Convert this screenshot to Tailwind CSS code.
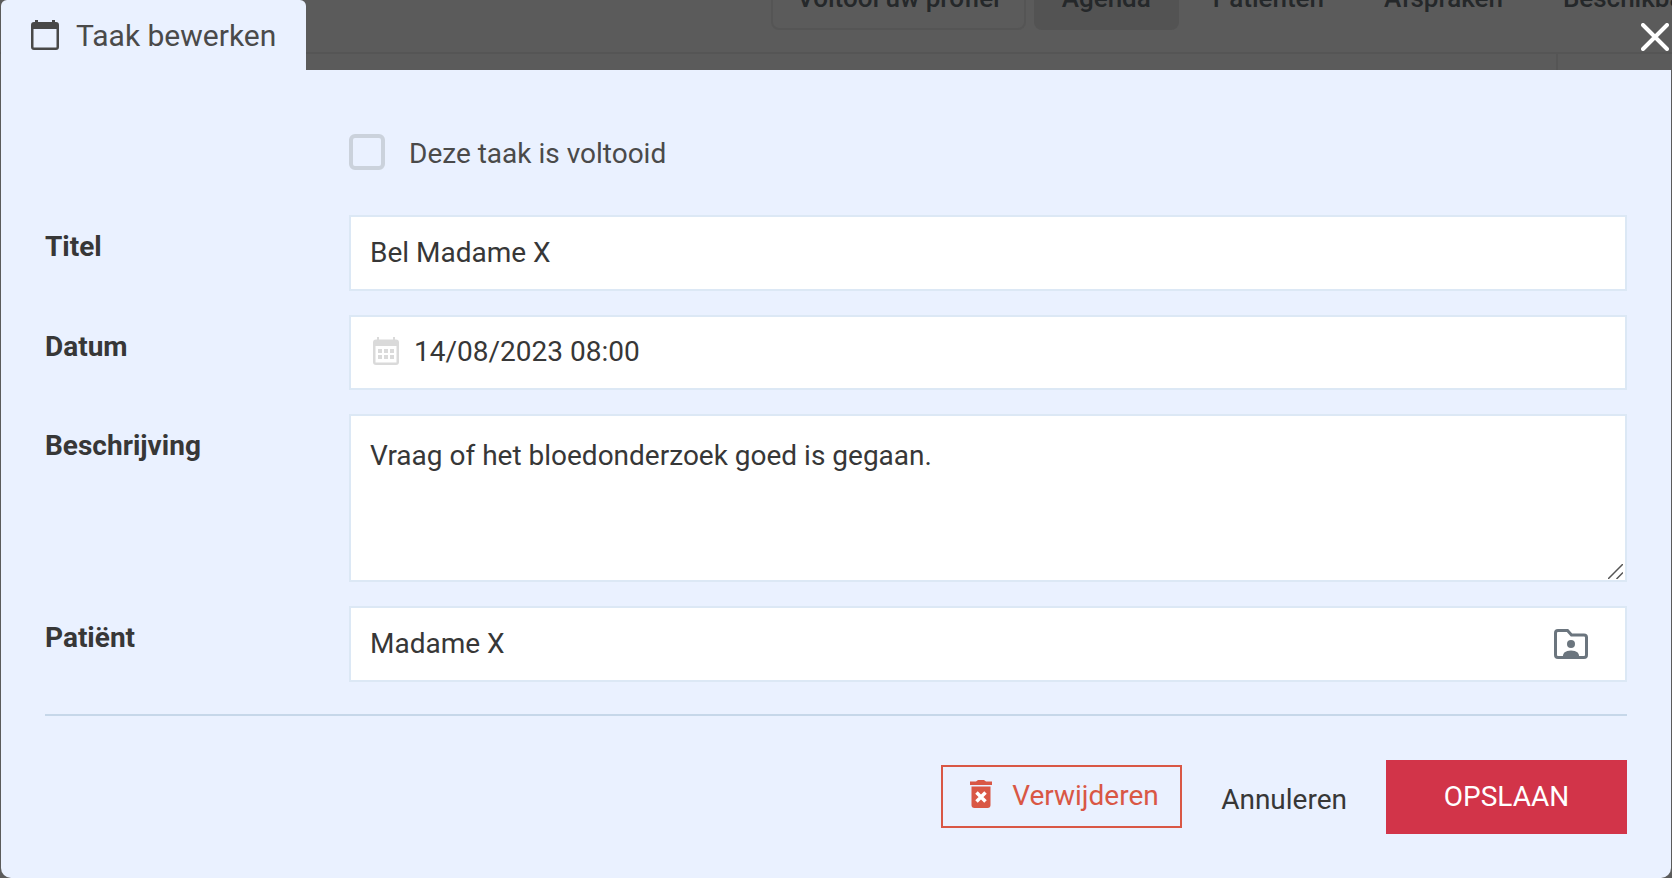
<!DOCTYPE html>
<html lang="nl">
<head>
    <meta charset="UTF-8">
    <meta name="viewport" content="width=device-width, initial-scale=1.0">
    <title>Taak bewerken</title>
    <script src="https://cdn.jsdelivr.net/npm/@tailwindcss/browser@4"></script>
</head>
<body class="bg-[#5b5b5b] font-['Roboto',sans-serif] text-[28px] leading-9 text-[#373737]">
    <!-- Agenda achter het venster -->
    <div class="flex flex-col h-screen overflow-hidden">
        <header class="h-[54px] shrink-0 border-b-2 border-[#555]">
            <nav class="-mt-[34px] flex gap-2 pl-[771px] text-[26px] font-medium text-[#25282a] whitespace-nowrap">
                <a href="#" class="h-16 px-6 leading-[60px] border-2 border-[#555] rounded-lg">Voltooi uw profiel</a>
                <a href="#" class="h-16 px-7 leading-[64px] bg-[#535353] rounded-lg">Agenda</a>
                <a href="#" class="h-16 px-[26px] leading-[64px]">Patiënten</a>
                <a href="#" class="h-16 px-[26px] leading-[64px]">Afspraken</a>
                <a href="#" class="h-16 px-[26px] leading-[64px]">Beschikbaarheid</a>
            </nav>
        </header>
        <main class="grow flex justify-end">
            <aside class="w-[116px] border-l-2 border-[#555]"></aside>
        </main>
    </div>

    <!-- Venster -->
    <div role="dialog" aria-labelledby="dialog-title" class="absolute inset-0 flex flex-col px-px">
        <div class="flex justify-between h-[70px] shrink-0">
            <div class="flex items-center gap-[17px] w-[305px] pl-[30px] bg-[#eaf1ff] rounded-t-md">
                <svg class="w-7 h-[30px] text-[#484848]" viewBox="0 0 28 30">
                    <path d="M4 0h3v2h14V0h3v2h1q3 0 3 3v22q0 3-3 3H3q-3 0-3-3V5q0-3 3-3h1zM2.500 9v18q0 .5.5.5h22q.5 0 .5-.5V9z" fill="currentColor" fill-rule="evenodd"/>
                </svg>
                <h1 id="dialog-title" class="pt-0.5 text-[30px] text-[#4a4a4a] whitespace-nowrap">Taak bewerken</h1>
            </div>
            <button type="button" aria-label="Sluiten" class="flex items-center pt-1 pr-0.5 text-white">
                <svg class="w-7 h-7" viewBox="0 0 28 28" fill="none" stroke="currentColor" stroke-width="4" stroke-linecap="round">
                    <path d="M2 2l24 24M26 2L2 26"/>
                </svg>
            </button>
        </div>

        <form class="grow bg-[#eaf1ff] rounded-b-[10px] pt-16 px-11">
            <div class="grid grid-cols-[304px_1fr] gap-y-6">
                <label class="col-start-2 flex gap-6 mb-[21px] h-9 text-[#4a4a4a]">
                    <input type="checkbox" class="appearance-none size-9 border-4 border-[#cbd2dc] rounded-md checked:bg-[#cbd2dc]">
                    <span class="pt-0.5">Deze taak is voltooid</span>
                </label>

                <label for="titel" class="pt-3.5 font-bold">Titel</label>
                <input type="text" id="titel" value="Bel Madame X" class="w-full h-[76px] px-[19px] pb-0.5 bg-white border-2 border-[#dce8f5] outline-none">

                <label for="datum" class="pt-3.5 font-bold">Datum</label>
                <div class="flex items-center h-[75px] pl-[22px] gap-[15px] bg-white border-2 border-[#dce8f5]">
                    <svg class="w-[26px] h-7 shrink-0 mb-1 text-[#dadada]" viewBox="0 0 26 28">
                        <path d="M4 0h2v2.500h14V0h2v2.500h1q3 0 3 3V25q0 3-3 3H3q-3 0-3-3V5.500q0-3 3-3h1zM2.500 9v16.500h21V9z" fill="currentColor" fill-rule="evenodd"/>
                        <path d="M5 12h4v4H5zm6 0h4v4h-4zm6 0h4v4h-4zM5 18h4v4H5zm6 0h4v4h-4zm6 0h4v4h-4z" fill="currentColor"/>
                    </svg>
                    <input type="text" id="datum" value="14/08/2023 08:00" class="grow h-full pb-0.5 bg-transparent outline-none">
                </div>

                <label for="beschrijving" class="pt-3.5 font-bold">Beschrijving</label>
                <div class="relative flex">
                    <textarea id="beschrijving" class="w-full h-[168px] px-[19px] py-[22px] bg-white border-2 border-[#dce8f5] resize-none outline-none">Vraag of het bloedonderzoek goed is gegaan.</textarea>
                    <svg class="absolute right-1 bottom-[3px] size-[15px] pointer-events-none" viewBox="0 0 15 15" fill="none" stroke="#555" stroke-width="1.5">
                        <path d="M0 15L15 0M8.500 15L15 8.500"/>
                    </svg>
                </div>

                <label for="patient" class="pt-3.5 font-bold">Patiënt</label>
                <div class="flex items-center h-[76px] pr-[37px] bg-white border-2 border-[#dce8f5]">
                    <input type="text" id="patient" value="Madame X" class="grow h-full px-[19px] pb-0.5 bg-transparent outline-none">
                    <button type="button" aria-label="Patiëntendossier">
                        <svg class="w-[34px] h-[30px] text-[#6b757e]" viewBox="0 0 34 30">
                            <path d="M4 1.500h9.500l4 4.500H30q2.500 0 2.500 2.500V26q0 2.500-2.500 2.500H4Q1.500 28.500 1.500 26V4Q1.500 1.500 4 1.500z" fill="none" stroke="currentColor" stroke-width="3"/>
                            <circle cx="17" cy="15" r="4" fill="currentColor"/>
                            <path d="M8.500 28.500q0-7 8.500-7t8.500 7z" fill="currentColor"/>
                        </svg>
                    </button>
                </div>
            </div>

            <hr class="mt-8 border-t-2 border-[#c6d7e9]">

            <div class="flex items-center justify-end mt-11">
                <button type="button" class="flex items-center gap-5 w-[241px] h-[63px] mb-0.5 pl-[27px] border-2 border-[#d95745] text-[#d95745]">
                    <svg class="w-[22px] h-7 mb-1" viewBox="0 0 22 28">
                        <path d="M6 1.500L8 0h6l2 1.500h6V5H0V1.500z" fill="currentColor"/>
                        <path d="M1.500 6.500h19V25q0 3-3 3h-13q-3 0-3-3z" fill="currentColor"/>
                        <path d="M6.500 12.500l9 9M15.500 12.500l-9 9" stroke="#fff" stroke-width="3.500"/>
                    </svg>
                    <span>Verwijderen</span>
                </button>
                <button type="button" class="px-[39px] pt-1.5">Annuleren</button>
                <button type="submit" class="w-[241px] h-[74px] bg-[#d23449] text-white">OPSLAAN</button>
            </div>
        </form>
    </div>
</body>
</html>
